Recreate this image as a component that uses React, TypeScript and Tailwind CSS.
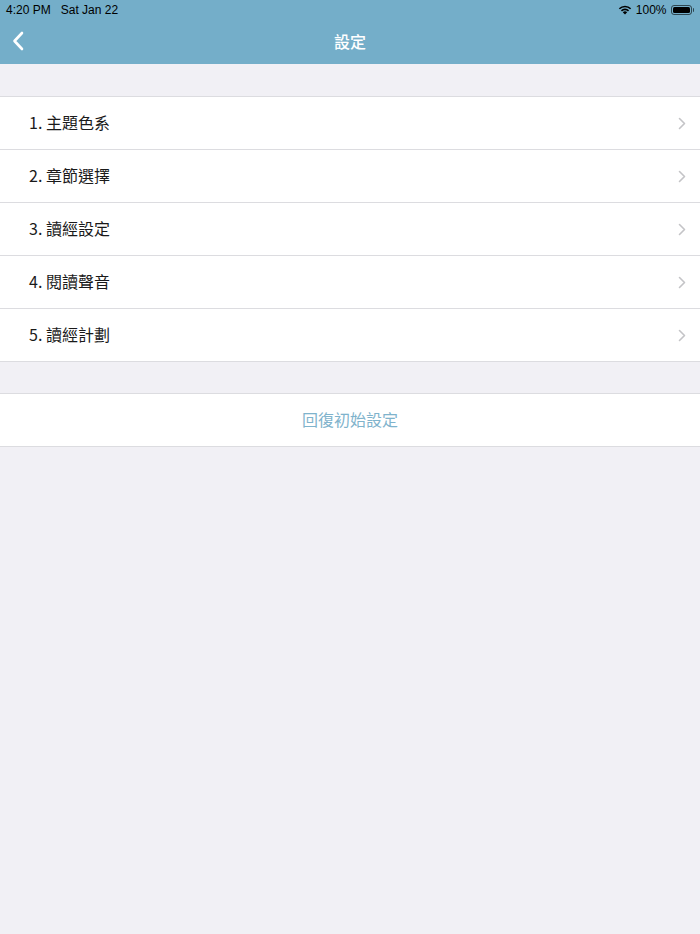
import React from "react";

const items = ["1. 主題色系", "2. 章節選擇", "3. 讀經設定", "4. 閱讀聲音", "5. 讀經計劃"];

function Chevron() {
  return (
    <svg width="8" height="13" viewBox="0 0 8 13" fill="none">
      <path d="M1.5 1.5L6.5 6.5L1.5 11.5" stroke="#c4c4c7" strokeWidth="1.6" strokeLinecap="round" strokeLinejoin="round" />
    </svg>
  );
}

export default function App() {
  const font = { fontFamily: '"Noto Sans CJK TC", "Noto Sans", "Liberation Sans", sans-serif' };
  return (
    <div className="w-[700px] h-[934px] bg-[#f1f0f5] flex flex-col" style={font}>
      <div className="bg-[#74aec9] h-[64px] flex flex-col">
        <div className="h-[20px] flex items-center justify-between px-[6px] text-[12px] text-black font-medium" style={{ fontFamily: '"Liberation Sans", sans-serif' }}>
          <div className="flex gap-[10px]">
            <span>4:20 PM</span>
            <span>Sat Jan 22</span>
          </div>
          <div className="flex items-center gap-[4px]">
            <svg width="14" height="10" viewBox="0 0 14 10">
              <path d="M7 9.5 L4.8 7.2 A3.2 3.2 0 0 1 9.2 7.2 Z" fill="black" />
              <path d="M2.9 5.3 A5.8 5.8 0 0 1 11.1 5.3 L10 6.4 A4.2 4.2 0 0 0 4 6.4 Z" fill="black" />
              <path d="M0.8 3.2 A8.8 8.8 0 0 1 13.2 3.2 L12.1 4.3 A7.2 7.2 0 0 0 1.9 4.3 Z" fill="black" />
            </svg>
            <span>100%</span>
            <div className="flex items-center">
              <div className="w-[21px] h-[10px] rounded-[3px] border border-black/60 p-[1px]">
                <div className="w-full h-full bg-black rounded-[1.5px]" />
              </div>
              <div className="w-[1.5px] h-[4px] bg-black/60 rounded-r-sm ml-[1px]" />
            </div>
          </div>
        </div>
        <div className="flex-1 flex items-center relative">
          <div className="absolute left-[12px] top-[11px]">
            <svg width="12" height="20" viewBox="0 0 12 20" fill="none">
              <path d="M10 2L2.5 10L10 18" stroke="white" strokeWidth="2.6" strokeLinecap="round" strokeLinejoin="round" />
            </svg>
          </div>
          <div className="flex-1 text-center text-white text-[16px] font-medium -mt-[3px]">設定</div>
        </div>
      </div>
      <div className="h-[32px]" />
      <div className="bg-white border-y border-[#dcdce0]">
        {items.map((t, i) => (
          <div key={t} className={`flex items-center justify-between pl-[29px] pr-[14px] ${i > 0 ? "h-[53px] border-t border-[#dcdce0]" : "h-[52px]"}`}>
            <span className="text-[16px] text-[#1a1a1a] -mt-[2px]">{t}</span>
            <Chevron />
          </div>
        ))}
      </div>
      <div className="h-[31px]" />
      <div className="bg-white border-y border-[#dcdce0] h-[54px] flex items-center justify-center">
        <span className="text-[16px] text-[#7fb3cc] -mt-[2px]">回復初始設定</span>
      </div>
    </div>
  );
}
